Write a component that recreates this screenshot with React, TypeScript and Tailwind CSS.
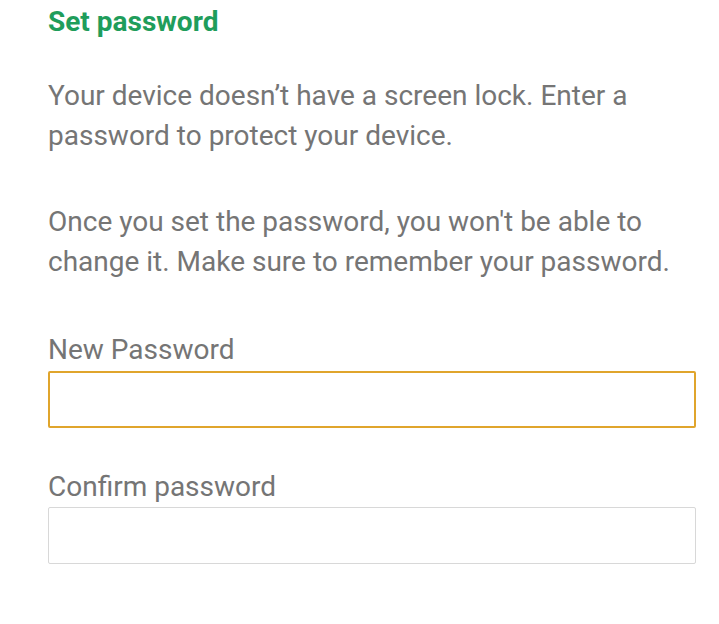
export default function App() {
  return (
    <div className="min-h-[624px] bg-white pl-[48px] pr-[23px] font-['Roboto',sans-serif]">
      <h1 className="pt-[5px] text-[28px] font-bold leading-[34px] text-[#1f9d5b]">Set password</h1>
      <div className="mt-[37px] text-[28px] leading-[40px] text-[#757575]">
        <p>Your device doesn’t have a screen lock. Enter a password to protect your device.</p>
        <p className="mt-[46px] pr-[20px]">
          Once you set the password, you won't be able to change it. Make sure to remember your password.
        </p>
      </div>
      <div className="mt-[48px]">
        <label className="block text-[28px] leading-[40px] text-[#757575]">New Password</label>
        <input
          type="password"
          className="mt-[1px] block h-[57px] w-full rounded-[2px] border-2 border-[#e0a52c] bg-white outline-none"
        />
      </div>
      <div className="mt-[39px]">
        <label className="block text-[28px] leading-[40px] text-[#757575]">Confirm password</label>
        <input
          type="password"
          className="block h-[57px] w-full rounded-[2px] border border-[#d8d8d8] bg-white outline-none"
        />
      </div>
    </div>
  );
}
